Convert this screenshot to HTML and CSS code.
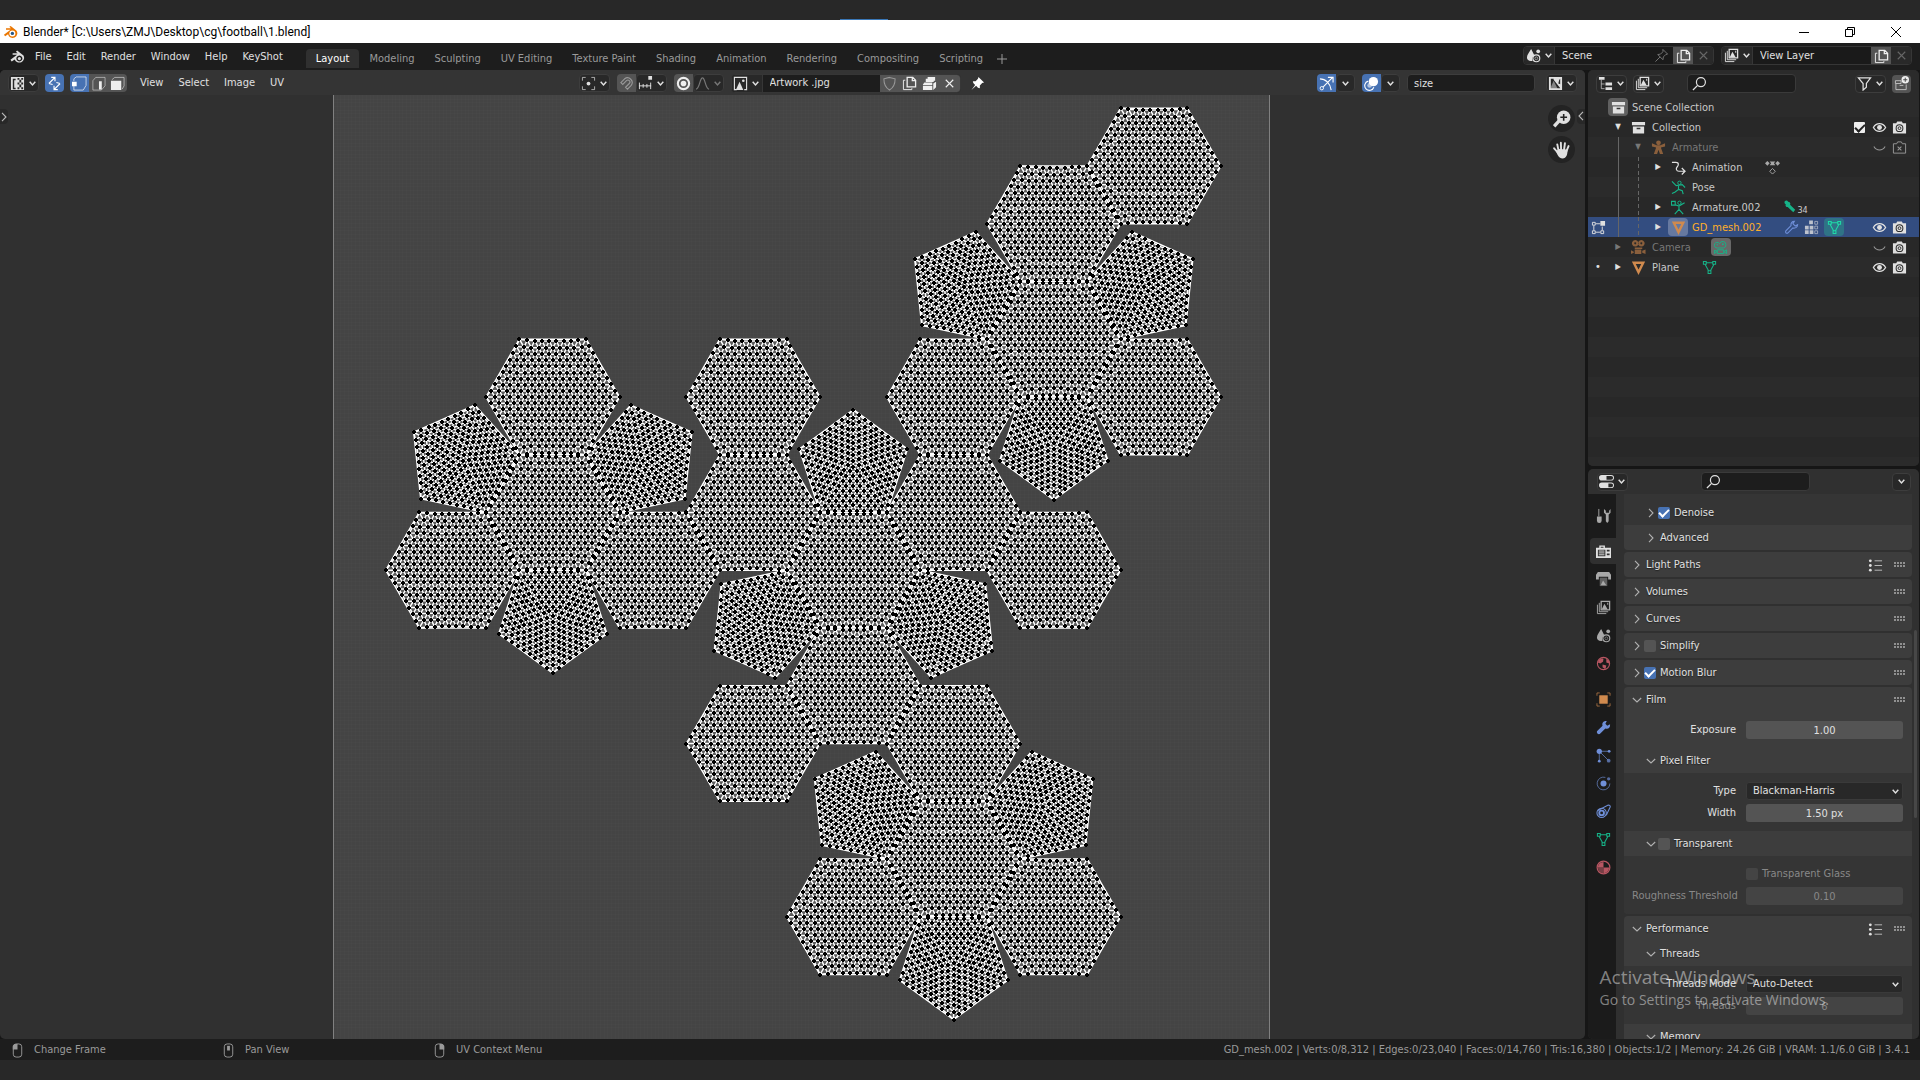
FILE: index.html
```html
<!DOCTYPE html>
<html lang="en">
<head>
    <meta charset="UTF-8">
    <meta name="viewport" content="width=device-width, initial-scale=1.0">
    <title>Blender* [C:\Users\ZMJ\Desktop\cg\football\1.blend]</title>
    <link rel="stylesheet" href="styles.css">
</head>
<body>
    <!-- Icon set -->
    <svg class="icon-set" aria-hidden="true">
        <symbol id="i-blender" viewBox="0 0 16 16"><path d="M1 11.5 8 6H3.2V4.5h5.3L6.8 3l1.4-1 6 4.8A5 5 0 1 1 5.4 11L2.3 13z" fill="currentColor"/><circle cx="10" cy="10" r="3.2" fill="#fff"/><circle cx="10" cy="10" r="1.8" fill="#265787"/></symbol>
        <symbol id="i-blender-mono" viewBox="0 0 16 16"><path fill-rule="evenodd" d="M.5 11.5 7.5 6H2.8V4.4h5.4L6.3 3l1.3-1.4 6.8 5.2A5.2 5.2 0 1 1 5 11.2L1.8 13.4zM10 7a3.2 3.2 0 1 0 .01 0z" fill="currentColor"/><circle cx="10" cy="10.2" r="1.7" fill="currentColor"/></symbol>
        <symbol id="i-down" viewBox="0 0 8 8"><path d="M1.5 2.5 4 5.3l2.5-2.8" fill="none" stroke="currentColor" stroke-width="1.3"/></symbol>
        <symbol id="i-right" viewBox="0 0 10 10"><path d="m3 .8 4 4.2-4 4.2" fill="none" stroke="currentColor" stroke-width="1.1"/></symbol>
        <symbol id="i-open" viewBox="0 0 10 10"><path d="M.8 3 5 7l4.200-4" fill="none" stroke="currentColor" stroke-width="1.1"/></symbol>
        <symbol id="i-uv" viewBox="0 0 16 16"><path fill="currentColor" d="M1 1h14v14H1z"/><path fill="#282828" d="M3 3h3v1.500H4.500v8H6V14H3zM8 2h2v2H8zm4 0h2v2h-2zm-2 2h2v3h-2zM8 7h2v2H8zm4 0h2v2h-2zm-2 2h2v3h-2zm-2 3h2v2H8zm4 0h2v2h-2z"/></symbol>
        <symbol id="i-sync" viewBox="0 0 16 16"><path d="M2 8 8.500 1.500M4.500 1.500h4v4M14 8l-6.500 6.500m4 0h-4v-4M2 8l4 1M14 8l-4-1" fill="none" stroke="currentColor" stroke-width="1.200"/></symbol>
        <symbol id="i-vert" viewBox="0 0 16 16"><path d="M2 5.500V3l2.500-2H15v9l-3 5H2v-5" fill="none" stroke="currentColor" stroke-opacity=".7"/><path fill="currentColor" d="M0 6h5v5H0z"/></symbol>
        <symbol id="i-edge" viewBox="0 0 16 16"><path d="M2 5l3-3.500h10v9L11 15H2z" fill="none" stroke="currentColor" stroke-opacity=".55"/><path fill="currentColor" d="M8.500 5.500h3v9h-3z"/></symbol>
        <symbol id="i-face" viewBox="0 0 16 16"><path d="M2 4l3-2.500h10v9L13 14" fill="none" stroke="currentColor" stroke-opacity=".6"/><path fill="currentColor" d="M1 5h11v10H1z"/></symbol>
        <symbol id="i-pivot" viewBox="0 0 16 16"><path d="M1.500 5V1.500H5m6 0h3.500V5m0 6v3.500H11m-6 0H1.500V11" fill="none" stroke="currentColor" stroke-opacity=".75"/><circle cx="8" cy="8" r="2" fill="currentColor"/></symbol>
        <symbol id="i-magnet" viewBox="0 0 16 16"><path d="M2 7 6 3a5 5 0 0 1 7 7l-4 4-2-2 4-4a2 2 0 0 0-3-3L4 9z" fill="none" stroke="currentColor" stroke-width="1.200"/></symbol>
        <symbol id="i-snap" viewBox="0 0 16 16"><path d="M1 10.500h13M1.500 7v7M5.500 8.500v4m4-4v4m4-5.500v7" fill="none" stroke="currentColor"/><path fill="currentColor" d="M11 0h4v4h-4z"/></symbol>
        <symbol id="i-prop" viewBox="0 0 16 16"><circle cx="8" cy="8" r="6" fill="none" stroke="currentColor" stroke-width="2.200"/><circle cx="8" cy="8" r="3" fill="currentColor"/></symbol>
        <symbol id="i-bell" viewBox="0 0 16 16"><path d="M1 14c4 0 4-12 7-12s3 12 7 12" fill="none" stroke="currentColor" stroke-width="1.300"/></symbol>
        <symbol id="i-image" viewBox="0 0 16 16"><path d="M4 14.500H1.500v-13h13v13H12" fill="none" stroke="currentColor" stroke-width="1.200"/><path d="m3 15 4-9 4 9z" fill="currentColor"/><circle cx="11" cy="5" r="1.400" fill="currentColor"/></symbol>
        <symbol id="i-imagefill" viewBox="0 0 16 16"><path d="M2 2h12v12H2z" fill="none" stroke="currentColor" stroke-width="2"/><path d="m2 14 4-9 4.500 9z" fill="currentColor" fill-opacity=".5"/><path d="m6 4 8 10V9l-3-1 1-4 2-2H6z" fill="currentColor"/></symbol>
        <symbol id="i-shield" viewBox="0 0 16 16"><path d="M8 1.500 14 3c0 6-1.500 9.500-6 12-4.500-2.500-6-6-6-12z" fill="none" stroke="currentColor" stroke-width="1.100"/></symbol>
        <symbol id="i-copy" viewBox="0 0 16 16"><path d="M5.500 1.500h6l3 3v7h-9zM11 1.500V5h3.500" fill="none" stroke="currentColor" stroke-width="1.400"/><path d="M3.500 4.500h-2v10h9v-1.500" fill="none" stroke="currentColor"/></symbol>
        <symbol id="i-files" viewBox="0 0 16 16"><path d="M6 1h8v4h-1.500v1.500H4V3h2zM1 9l1.500-2H11v2.500H1zM1 10.500h10V15H1zM12 8l3-2v6l-3 3z" fill="currentColor"/></symbol>
        <symbol id="i-x" viewBox="0 0 16 16"><path d="m4 4 8 8m0-8-8 8" fill="none" stroke="currentColor" stroke-width="1.200"/></symbol>
        <symbol id="i-pin" viewBox="0 0 16 16"><path d="m9 1 6 6-2 .5-2.500 2.500v3L8.500 12.500l-2-2-5 4.500 4-5.500-2-2L3 5.500h3L8.500 3z" fill="currentColor"/></symbol>
        <symbol id="i-pinline" viewBox="0 0 16 16"><path d="m9.500 1.500 5 5-2 .5-2.500 2.500-.5 3-5.500-5.500 3-.5 2.500-2.500zM6.500 9.500l-5 5" fill="none" stroke="currentColor"/></symbol>
        <symbol id="i-gizmo" viewBox="0 0 16 16"><path d="M1 3c6 0 11 5 12 12M4.500 11.500 14 2M9.500 1.500H15V7" fill="none" stroke="currentColor" stroke-width="1.200"/><circle cx="3" cy="13" r="1.800" fill="none" stroke="currentColor"/></symbol>
        <symbol id="i-overlay" viewBox="0 0 16 16"><circle cx="10" cy="6" r="5" fill="currentColor"/><path d="M4.500 5.500a5 5 0 1 0 6 6.500" fill="none" stroke="currentColor" stroke-width="1.200"/><circle cx="6" cy="10" r="2.500" fill="currentColor" fill-opacity=".6"/></symbol>
        <symbol id="i-zoom" viewBox="0 0 16 16"><circle cx="9.500" cy="6.500" r="6" fill="currentColor"/><path d="m6 9-5 5.500" stroke="currentColor" stroke-width="3"/><path d="M9.500 3.500v6m-3-3h6" stroke="#222" stroke-width="1.400"/></symbol>
        <symbol id="i-hand" viewBox="0 0 16 16"><path d="M4 10 1 6.500m4 2.500L3.800 3m3.400 5L7 1.500M9.800 8l.8-6M12 9l1.800-4.500" fill="none" stroke="currentColor" stroke-width="1.700" stroke-linecap="round"/><path d="M2 8c2 1.500 2-.5 3-1l7.800.5c.4 4-.8 8-4.300 8S4 12 2 8z" fill="currentColor"/></symbol>
        <symbol id="i-scene" viewBox="0 0 16 16"><path d="M5.500 1 9 8a4 4 0 0 0-2 5.500c-3 1-6-.5-6-3.500C1 7 4 4 5.500 1z" fill="currentColor"/><circle cx="11" cy="11" r="3.700" fill="none" stroke="currentColor" stroke-width="1.200"/><circle cx="13" cy="3.500" r="2" fill="currentColor"/><circle cx="11" cy="11" r="1.500" fill="none" stroke="currentColor" stroke-opacity=".6"/></symbol>
        <symbol id="i-layer" viewBox="0 0 16 16"><path d="M5.500 1.500h9v9h-9z" fill="none" stroke="currentColor" stroke-width="1.400"/><path d="m6 10 3-6 3.500 6z" fill="currentColor"/><path d="M12 3h1v2h-1z" fill="currentColor"/><path d="M3.500 3v9.500H13M1.500 5v9.500H11" fill="none" stroke="currentColor"/></symbol>
        <symbol id="i-outliner" viewBox="0 0 16 16"><path d="M1 1h6v3H1zM8 7h7v3H8zm0 5h7v3H8z" fill="currentColor"/><path d="M3.500 4v9.500H7M3.500 8.500H7" fill="none" stroke="currentColor" stroke-opacity=".7"/></symbol>
        <symbol id="i-search" viewBox="0 0 16 16"><circle cx="9.500" cy="6.500" r="4.800" fill="none" stroke="currentColor" stroke-width="1.300"/><path d="m6 10-5 5" stroke="currentColor" stroke-width="1.400"/></symbol>
        <symbol id="i-filter" viewBox="0 0 16 16"><path d="M1.500 2h13L10 8v4l-3.500 3V8z" fill="none" stroke="currentColor" stroke-width="1.300"/></symbol>
        <symbol id="i-newcol" viewBox="0 0 16 16"><path d="M2 8.500v6h11V9M6 10h4M1.500 5h6v3h-6z" fill="none" stroke="currentColor" stroke-opacity=".7"/><circle cx="12" cy="4" r="4" fill="currentColor"/><path d="M12 1.800v4.400M9.800 4h4.400" stroke="#444"/></symbol>
        <symbol id="i-box" viewBox="0 0 16 16"><path d="M1 2h14v3.500H1zM2 7h12v7.500H2z" fill="currentColor"/><path d="M6 9h4" stroke="#333" stroke-width="1.500"/></symbol>
        <symbol id="i-eye" viewBox="0 0 16 16"><path d="M1.500 8c3-5.500 10-5.500 13 0-3 5.500-10 5.500-13 0z" fill="none" stroke="currentColor" stroke-width="1.400"/><circle cx="8" cy="8" r="2.600" fill="currentColor"/></symbol>
        <symbol id="i-closed" viewBox="0 0 16 16"><path d="M2 7c3 5 9 5 12 0" fill="none" stroke="currentColor" stroke-width="1.100"/></symbol>
        <symbol id="i-cam" viewBox="0 0 16 16"><path d="M1 3.500h3.500l1-2h5l1 2H15v11H1z" fill="currentColor"/><circle cx="8" cy="8.700" r="3.600" fill="none" stroke="#2b2b2b" stroke-width="1.100"/><circle cx="8" cy="8.700" r="1.500" fill="none" stroke="#2b2b2b"/></symbol>
        <symbol id="i-camoff" viewBox="0 0 16 16"><path d="M1.500 4h3.500l1-2h4l1 2h3.500v10h-13z" fill="none" stroke="currentColor"/><path d="m6 7 4 4m0-4-4 4" stroke="currentColor" stroke-width="1.100"/></symbol>
        <symbol id="i-arm" viewBox="0 0 16 16"><circle cx="8" cy="3" r="2.500" fill="currentColor"/><path d="M1 3.500 6 5.500h4l5-2V7l-4.500 1 2.500 7h-3.500L8 10.500 6.500 15H3l2.500-7L1 7z" fill="currentColor"/></symbol>
        <symbol id="i-anim" viewBox="0 0 16 16"><path d="M1 2.500h4c4 0 3 3.500 1.500 5s-1 4.500 2 4.500h6M11.500 8.500 15 12l-3.500 3.500" fill="none" stroke="currentColor" stroke-width="1.300"/></symbol>
        <symbol id="i-keys" viewBox="0 0 16 16"><path d="m2.500 1 2.500 2.500L2.500 6 0 3.500zM13.500 1 16 3.500 13.500 6 11 3.500zM5 1.500h6l-1.500 2 1.500 2H5l1.500-2z" fill="currentColor"/><path d="m8 9 3 3-3 3-3-3z" fill="none" stroke="currentColor"/></symbol>
        <symbol id="i-pose" viewBox="0 0 16 16"><circle cx="9" cy="3" r="1.800" fill="none" stroke="currentColor"/><path d="M1 1.500 5.500 6 12 5l3 3M8 6v4l-4 3-3 1.500M8 10l4 1.500 1 3.500" fill="none" stroke="currentColor" stroke-width="1.200"/></symbol>
        <symbol id="i-armdata" viewBox="0 0 16 16"><circle cx="9" cy="3" r="1.800" fill="none" stroke="currentColor"/><path d="M.5 1.500h4v4h-4zM4.500 5l4 1.500 6-3.500M8.500 6.500V10L4 15m4.500-5 4.500 5" fill="none" stroke="currentColor" stroke-width="1.200"/></symbol>
        <symbol id="i-bone" viewBox="0 0 16 16"><path d="M3 4.500A2 2 0 1 1 5.500 2a2 2 0 0 1 2 3L13 10.500 11 13 5 7.500a2 2 0 0 1-2-3z" fill="currentColor"/></symbol>
        <symbol id="i-mesh" viewBox="0 0 16 16"><path d="M3 3h10L8 13z" fill="none" stroke="currentColor" stroke-width="2.600"/></symbol>
        <symbol id="i-meshdata" viewBox="0 0 16 16"><path d="M4.500 3h7M3.500 5 7 11.500m5.500-6.500L9 11.500M1.500 1.500h3v3h-3zm10 0h3v3h-3zm-5 10h3v3h-3z" fill="none" stroke="currentColor" stroke-width="1.100"/></symbol>
        <symbol id="i-wrench" viewBox="0 0 16 16"><path d="M15 4.500 12 6 10 4l1.500-3C8 .5 6 3 7 6l-6 6c-.5 2 1 3.500 3 3l6-6c3 1 5.500-1 5-4.500z" fill="currentColor"/></symbol>
        <symbol id="i-wrenchline" viewBox="0 0 16 16"><path d="M14.500 5 12 6.500 9.500 4 11 1.500C8.500 1.500 7 3.500 7.500 6L2 11.500c-1 2 .5 3 2 2.500L9.500 8.500c3 .5 5-1 5-3.500z" fill="none" stroke="currentColor" stroke-width="1.200"/></symbol>
        <symbol id="i-particles" viewBox="0 0 16 16"><circle cx="3.500" cy="3.500" r="2.800" fill="currentColor"/><path d="M3.500 3.500h10M3.500 3.500v10M3.500 3.500l9.500 9.500" stroke="currentColor" stroke-opacity=".7"/><circle cx="14" cy="3.500" r="1.500" fill="currentColor"/><circle cx="3.500" cy="14" r="1.500" fill="currentColor"/><circle cx="13.500" cy="13.500" r="2" fill="currentColor" fill-opacity=".7"/></symbol>
        <symbol id="i-group" viewBox="0 0 16 16"><path d="M5.500.500h4v4h-4zM1 6h4v4H1zm5 0h4v4H6zM1 11h4v4H1zm5 0h4v4H6z" fill="currentColor" fill-opacity=".8"/><path d="M11.500 1.500h3v3h-3zm0 5h3v3h-3zm0 5h3v3h-3z" fill="none" stroke="currentColor" stroke-opacity=".6"/></symbol>
        <symbol id="i-movie" viewBox="0 0 16 16"><path fill-rule="evenodd" d="M4.500 0a3.500 3.500 0 1 0 .01 0zm0 2.500a1 1 0 1 0 .01 0zM11 0a3.500 3.500 0 1 0 .01 0zm0 2.500a1 1 0 1 0 .01 0zM4 8h8v1.500h-8zM4 10h7v5H4zM0 11l3 1.500v1L0 15zM15.500 10v5L12 13.500v-2z" fill="currentColor"/></symbol>
        <symbol id="i-movieline" viewBox="0 0 16 16"><path d="M4.500 8.500a3 3 0 1 1 2.500-4.500 3.500 3.500 0 1 1 4 4.500zM4.500 10.500h7v4h-7zM1.500 11l3 1-3 2.500zM14.500 10.500v4l-3-2z" fill="none" stroke="currentColor"/><circle cx="4.500" cy="5" r=".8" fill="currentColor"/><circle cx="10.500" cy="4.500" r="1" fill="currentColor"/></symbol>
        <symbol id="i-editmode" viewBox="0 0 16 16"><path d="M1.500 2.500h3v3h-3zm0 9h3v3h-3zm9 0h3v3h-3zM5 4h5M3 6v5m9-4v4m-7 2h5" fill="none" stroke="currentColor"/><path d="M10 1h5v5h-5z" fill="currentColor"/></symbol>
        <symbol id="i-props" viewBox="0 0 16 16"><path fill-rule="evenodd" d="M3 1h10a3 3 0 0 1 0 6H3a3 3 0 0 1 0-6zm5 1v4h5a2 2 0 0 0 0-4zM3 9h10a3 3 0 0 1 0 6H3a3 3 0 0 1 0-6zm7 1v4h3a2 2 0 0 0 0-4z" fill="currentColor"/></symbol>
        <symbol id="i-tool" viewBox="0 0 16 16"><path d="M3 1v8" stroke="currentColor"/><path d="M1 9h5v4.500a2.500 2.500 0 0 1-5 0zM8.500 1v4l2 2v7l1.500 2 1.500-2V7L15.500 5V1L14 3v2h-3.500V3z" fill="currentColor"/></symbol>
        <symbol id="i-render" viewBox="0 0 16 16"><path fill-rule="evenodd" d="M0 4h3.500V1.500h6V4H16v11H0zm5 0h3V3H5zM2 6v7h8V6zm9.500 0v2h3V6zm0 4v2h3v-2z" fill="currentColor"/><path d="M3 7.500h6m-6 2h6m-6 2h6" stroke="currentColor"/></symbol>
        <symbol id="i-output" viewBox="0 0 16 16"><path d="M2 0h12l2 3v5h-3V5H3v3H0V3z" fill="currentColor"/><path d="M4 6h8v9H4z" fill="currentColor" fill-opacity=".5"/><path d="m5 14 2.500-5 3.500 5z" fill="currentColor"/></symbol>
        <symbol id="i-world" viewBox="0 0 16 16"><circle cx="8" cy="8" r="6.500" fill="none" stroke="currentColor" stroke-width="1.200"/><path d="M3 4c2-1 4-2 5-1L7.500 6 4.500 8 2 7zM7 9l4 1-1 4-3-2zM11 3l3 2v3l-3-1z" fill="currentColor"/></symbol>
        <symbol id="i-object" viewBox="0 0 16 16"><path d="M1 4V1h3m8 0h3v3m0 8v3h-3m-8 0H1v-3" fill="none" stroke="currentColor" stroke-opacity=".7"/><path d="M3.500 3.500h9v9h-9z" fill="currentColor"/></symbol>
        <symbol id="i-physics" viewBox="0 0 16 16"><circle cx="8" cy="8" r="3.200" fill="currentColor"/><path d="M10 1.500A6.800 6.800 0 1 0 14.800 8" fill="none" stroke="currentColor" stroke-opacity=".7"/><circle cx="13.500" cy="3" r="1.800" fill="currentColor" fill-opacity=".7"/></symbol>
        <symbol id="i-constraint" viewBox="0 0 16 16"><path d="M2 7 13 1c2 0 2.500 1.500 2 2.500L11 12" fill="none" stroke="currentColor" stroke-width="1.100"/><circle cx="6" cy="9.500" r="5" fill="none" stroke="currentColor" stroke-width="1.100"/><circle cx="6" cy="9.500" r="2.500" fill="none" stroke="currentColor" stroke-width="2"/></symbol>
        <symbol id="i-material" viewBox="0 0 16 16"><circle cx="8" cy="8" r="6.800" fill="none" stroke="currentColor" stroke-width="1.300"/><path d="M8 8H2a6 6 0 0 1 6-6zM8 8h6a6 6 0 0 1-6 6z" fill="currentColor"/><path d="M2 8h6v6a6 6 0 0 1-6-6z" fill="currentColor" fill-opacity=".6"/></symbol>
        <symbol id="i-list" viewBox="0 0 16 16"><path d="M7 3h8M7 8h8M7 13h8" stroke="currentColor" stroke-opacity=".8"/><circle cx="2.500" cy="3" r="1.500" fill="currentColor"/><circle cx="2.500" cy="8" r="1.500" fill="currentColor"/><circle cx="2.500" cy="13" r="1.500" fill="currentColor"/></symbol>
        <symbol id="i-lmb" viewBox="0 0 12 16"><rect x="1.500" y="1" width="9" height="14" rx="3" fill="none" stroke="currentColor"/><path d="M1 7V3l2-2h3v6z" fill="currentColor"/></symbol>
        <symbol id="i-mmb" viewBox="0 0 12 16"><rect x="1.500" y="1" width="9" height="14" rx="3" fill="none" stroke="currentColor"/><path d="M4.500 3h3v5h-3z" fill="currentColor"/></symbol>
        <symbol id="i-rmb" viewBox="0 0 12 16"><rect x="1.500" y="1" width="9" height="14" rx="3" fill="none" stroke="currentColor"/><path d="M6 1h3l2 2v4H6z" fill="currentColor"/></symbol>
    </svg>

    <div class="desktop-strip"><span class="strip-mark"></span></div>

    <header class="titlebar">
        <svg class="icon logo"><use href="#i-blender"/></svg>
        <span class="titlebar-text">Blender* [C:\Users\ZMJ\Desktop\cg\football\1.blend]</span>
        <div class="window-buttons">
            <button aria-label="Minimize"><svg viewBox="0 0 12 12"><path d="M1 6.500h10"/></svg></button>
            <button aria-label="Restore"><svg viewBox="0 0 12 12"><path d="M1.500 3.500h7v7h-7zM3.500 3V1.500h7v7H9"/></svg></button>
            <button aria-label="Close"><svg viewBox="0 0 12 12"><path d="m1 1 10 10M11 1 1 11"/></svg></button>
        </div>
    </header>

    <!-- Menus and workspaces -->
    <nav class="menubar">
        <button class="app-menu" aria-label="Blender"><svg class="icon"><use href="#i-blender-mono"/></svg></button>
        <div class="menus">
            <button>File</button><button>Edit</button><button>Render</button><button>Window</button><button>Help</button><button>KeyShot</button>
        </div>
        <div class="workspaces">
            <button class="active">Layout</button><button>Modeling</button><button>Sculpting</button><button>UV Editing</button><button>Texture Paint</button><button>Shading</button><button>Animation</button><button>Rendering</button><button>Compositing</button><button>Scripting</button>
            <button class="add" aria-label="Add workspace"><svg class="icon-s" viewBox="0 0 10 10"><path d="M5 0v10M0 5h10" stroke="currentColor"/></svg></button>
        </div>
        <div class="id-block scene-block">
            <button class="drop" aria-label="Browse scene"><svg class="icon"><use href="#i-scene"/></svg><svg class="chev"><use href="#i-down"/></svg></button>
            <input aria-label="Scene name" value="Scene">
            <button class="plain" aria-label="Pin scene"><svg class="icon"><use href="#i-pinline"/></svg></button>
            <button class="tool" aria-label="New scene"><svg class="icon"><use href="#i-copy"/></svg></button>
            <button class="off" aria-label="Delete scene"><svg class="icon"><use href="#i-x"/></svg></button>
        </div>
        <div class="id-block layer-block">
            <button class="drop" aria-label="Browse view layer"><svg class="icon"><use href="#i-layer"/></svg><svg class="chev"><use href="#i-down"/></svg></button>
            <input aria-label="View layer name" value="View Layer">
            <button class="tool" aria-label="New view layer"><svg class="icon"><use href="#i-copy"/></svg></button>
            <button class="off" aria-label="Remove view layer"><svg class="icon"><use href="#i-x"/></svg></button>
        </div>
    </nav>

    <main class="workspace">
        <!-- UV editor -->
        <section class="editor uv-editor">
            <div class="editor-header">
                <div class="header-side">
                    <button class="drop" aria-label="Editor type"><svg class="icon"><use href="#i-uv"/></svg><svg class="chev"><use href="#i-down"/></svg></button>
                    <button class="tool on solo" aria-label="Sync selection"><svg class="icon"><use href="#i-sync"/></svg></button>
                    <div class="segment">
                        <button class="tool on" aria-label="Vertex"><svg class="icon"><use href="#i-vert"/></svg></button><button class="tool" aria-label="Edge"><svg class="icon"><use href="#i-edge"/></svg></button><button class="tool" aria-label="Face"><svg class="icon"><use href="#i-face"/></svg></button>
                    </div>
                    <div class="menus editor-menus"><button>View</button><button>Select</button><button>Image</button><button>UV</button></div>
                </div>
                <div class="header-mid">
                    <button class="drop" aria-label="Pivot"><svg class="icon"><use href="#i-pivot"/></svg><svg class="chev"><use href="#i-down"/></svg></button>
                    <div class="segment">
                        <button class="tool dim" aria-label="Snap"><svg class="icon"><use href="#i-magnet"/></svg></button><button class="drop" aria-label="Snap target"><svg class="icon"><use href="#i-snap"/></svg><svg class="chev"><use href="#i-down"/></svg></button>
                    </div>
                    <div class="segment">
                        <button class="tool" aria-label="Proportional editing"><svg class="icon"><use href="#i-prop"/></svg></button><button class="drop faded" aria-label="Falloff"><svg class="icon"><use href="#i-bell"/></svg><svg class="chev"><use href="#i-down"/></svg></button>
                    </div>
                    <div class="id-block image-block">
                        <button class="drop" aria-label="Browse image"><svg class="icon"><use href="#i-image"/></svg><svg class="chev"><use href="#i-down"/></svg></button>
                        <input aria-label="Image name" value="Artwork .jpg">
                        <button class="tool dim" aria-label="Fake user"><svg class="icon"><use href="#i-shield"/></svg></button>
                        <button class="tool" aria-label="New image"><svg class="icon"><use href="#i-copy"/></svg></button>
                        <button class="tool" aria-label="Open image"><svg class="icon"><use href="#i-files"/></svg></button>
                        <button class="tool" aria-label="Unlink image"><svg class="icon"><use href="#i-x"/></svg></button>
                    </div>
                    <button class="plain pin" aria-label="Pin"><svg class="icon"><use href="#i-pin"/></svg></button>
                </div>
                <div class="header-end">
                    <div class="segment">
                        <button class="tool on" aria-label="Gizmos"><svg class="icon"><use href="#i-gizmo"/></svg></button><button class="drop narrow" aria-label="Gizmo options"><svg class="chev"><use href="#i-down"/></svg></button>
                    </div>
                    <div class="segment">
                        <button class="tool on" aria-label="Overlays"><svg class="icon"><use href="#i-overlay"/></svg></button><button class="drop narrow" aria-label="Overlay options"><svg class="chev"><use href="#i-down"/></svg></button>
                    </div>
                    <input class="uv-name" aria-label="UV map" value="size">
                    <button class="drop display" aria-label="Display channels"><svg class="icon"><use href="#i-imagefill"/></svg><svg class="chev"><use href="#i-down"/></svg></button>
                </div>
            </div>
            <div class="uv-view">
                <canvas id="uvCanvas" role="img" aria-label="Unwrapped football mesh"></canvas>
                <button class="edge-toggle left" aria-label="Show toolbar"><svg><use href="#i-right"/></svg></button>
                <button class="edge-toggle right" aria-label="Show sidebar"><svg><use href="#i-right"/></svg></button>
                <div class="nav-gizmos">
                    <button aria-label="Zoom"><svg class="icon-l"><use href="#i-zoom"/></svg></button>
                    <button aria-label="Pan"><svg class="icon-l"><use href="#i-hand"/></svg></button>
                </div>
            </div>
        </section>

        <div class="side">
            <!-- Outliner -->
            <section class="editor outliner">
                <div class="editor-header">
                    <button class="drop" aria-label="Editor type"><svg class="icon"><use href="#i-outliner"/></svg><svg class="chev"><use href="#i-down"/></svg></button>
                    <button class="drop" aria-label="Display mode"><svg class="icon"><use href="#i-layer"/></svg><svg class="chev"><use href="#i-down"/></svg></button>
                    <label class="search"><svg class="icon"><use href="#i-search"/></svg><input type="search" aria-label="Filter outliner"></label>
                    <button class="drop" aria-label="Filter"><svg class="icon"><use href="#i-filter"/></svg><svg class="chev"><use href="#i-down"/></svg></button>
                    <button class="tool solo" aria-label="New collection"><svg class="icon"><use href="#i-newcol"/></svg></button>
                </div>
                <ul class="tree">
                    <li><span class="cell"></span><span class="cell chip"><svg class="icon"><use href="#i-box"/></svg></span><span class="name">Scene Collection</span></li>
                    <li><span class="cell"></span><span class="cell tri">▼</span><span class="cell"><svg class="icon"><use href="#i-box"/></svg></span><span class="name">Collection</span>
                        <span class="flags"><input type="checkbox" class="white-check" aria-label="Include collection" checked><svg class="icon"><use href="#i-eye"/></svg><svg class="icon"><use href="#i-cam"/></svg></span></li>
                    <li class="muted"><span class="cell"></span><span class="cell guide"></span><span class="cell tri">▼</span><span class="cell orange"><svg class="icon"><use href="#i-arm"/></svg></span><span class="name">Armature</span>
                        <span class="flags"><svg class="icon"><use href="#i-closed"/></svg><svg class="icon"><use href="#i-camoff"/></svg></span></li>
                    <li><span class="cell"></span><span class="cell guide"></span><span class="cell guide dashed"></span><span class="cell tri">▶</span><span class="cell"><svg class="icon"><use href="#i-anim"/></svg></span><span class="name">Animation</span><span class="extras grey"><svg class="icon"><use href="#i-keys"/></svg></span></li>
                    <li><span class="cell"></span><span class="cell guide"></span><span class="cell guide dashed"></span><span class="cell"></span><span class="cell green"><svg class="icon"><use href="#i-pose"/></svg></span><span class="name">Pose</span></li>
                    <li><span class="cell"></span><span class="cell guide"></span><span class="cell guide dashed"></span><span class="cell tri">▶</span><span class="cell green"><svg class="icon"><use href="#i-armdata"/></svg></span><span class="name">Armature.002</span><span class="extras green"><svg class="icon"><use href="#i-bone"/></svg><small>34</small></span></li>
                    <li class="selected"><span class="cell"><svg class="icon"><use href="#i-editmode"/></svg></span><span class="cell guide"></span><span class="cell guide dashed"></span><span class="cell tri">▶</span><span class="cell chip orange"><svg class="icon"><use href="#i-mesh"/></svg></span><span class="name">GD_mesh.002</span>
                        <span class="extras"><svg class="icon blue"><use href="#i-wrenchline"/></svg><svg class="icon"><use href="#i-group"/></svg><span class="cell chip data-chip"><svg class="icon"><use href="#i-meshdata"/></svg></span></span>
                        <span class="flags"><svg class="icon"><use href="#i-eye"/></svg><svg class="icon"><use href="#i-cam"/></svg></span></li>
                    <li class="muted"><span class="cell"></span><span class="cell tri">▶</span><span class="cell orange"><svg class="icon"><use href="#i-movie"/></svg></span><span class="name">Camera</span><span class="extras close"><span class="cell chip green"><svg class="icon"><use href="#i-movieline"/></svg></span></span>
                        <span class="flags"><svg class="icon"><use href="#i-closed"/></svg><svg class="icon lit"><use href="#i-cam"/></svg></span></li>
                    <li><span class="cell dot">•</span><span class="cell tri">▶</span><span class="cell orange"><svg class="icon"><use href="#i-mesh"/></svg></span><span class="name">Plane</span><span class="extras green"><svg class="icon"><use href="#i-meshdata"/></svg></span>
                        <span class="flags"><svg class="icon"><use href="#i-eye"/></svg><svg class="icon"><use href="#i-cam"/></svg></span></li>
                </ul>
            </section>

            <!-- Properties -->
            <section class="editor properties">
                <div class="editor-header">
                    <button class="drop" aria-label="Editor type"><svg class="icon"><use href="#i-props"/></svg><svg class="chev"><use href="#i-down"/></svg></button>
                    <label class="search"><svg class="icon"><use href="#i-search"/></svg><input type="search" aria-label="Search properties"></label>
                    <button class="drop narrow" aria-label="Options"><svg class="chev"><use href="#i-down"/></svg></button>
                </div>
                <div class="props-body">
                    <nav class="tabs">
                        <button class="grey" aria-label="Tool"><svg class="icon"><use href="#i-tool"/></svg></button>
                        <button class="active group" aria-label="Render"><svg class="icon"><use href="#i-render"/></svg></button>
                        <button class="grey" aria-label="Output"><svg class="icon"><use href="#i-output"/></svg></button>
                        <button class="grey" aria-label="View Layer"><svg class="icon"><use href="#i-layer"/></svg></button>
                        <button class="grey" aria-label="Scene"><svg class="icon"><use href="#i-scene"/></svg></button>
                        <button class="red" aria-label="World"><svg class="icon"><use href="#i-world"/></svg></button>
                        <button class="orange group" aria-label="Object"><svg class="icon"><use href="#i-object"/></svg></button>
                        <button class="blue" aria-label="Modifiers"><svg class="icon"><use href="#i-wrench"/></svg></button>
                        <button class="blue" aria-label="Particles"><svg class="icon"><use href="#i-particles"/></svg></button>
                        <button class="blue" aria-label="Physics"><svg class="icon"><use href="#i-physics"/></svg></button>
                        <button class="blue" aria-label="Constraints"><svg class="icon"><use href="#i-constraint"/></svg></button>
                        <button class="green" aria-label="Data"><svg class="icon"><use href="#i-meshdata"/></svg></button>
                        <button class="red" aria-label="Material"><svg class="icon"><use href="#i-material"/></svg></button>
                    </nav>
                    <div class="panels">
                        <div class="panel cut">
                            <div class="panel-head sub"><svg class="arrow"><use href="#i-right"/></svg><input type="checkbox" id="denoise" checked><label for="denoise">Denoise</label></div>
                            <div class="panel-head sub"><svg class="arrow"><use href="#i-right"/></svg><span>Advanced</span></div>
                        </div>
                        <div class="panel"><div class="panel-head"><svg class="arrow"><use href="#i-right"/></svg><span>Light Paths</span><svg class="icon preset"><use href="#i-list"/></svg><i class="grip"></i></div></div>
                        <div class="panel"><div class="panel-head"><svg class="arrow"><use href="#i-right"/></svg><span>Volumes</span><i class="grip"></i></div></div>
                        <div class="panel"><div class="panel-head"><svg class="arrow"><use href="#i-right"/></svg><span>Curves</span><i class="grip"></i></div></div>
                        <div class="panel"><div class="panel-head"><svg class="arrow"><use href="#i-right"/></svg><input type="checkbox" id="simplify"><label for="simplify">Simplify</label><i class="grip"></i></div></div>
                        <div class="panel"><div class="panel-head"><svg class="arrow"><use href="#i-right"/></svg><input type="checkbox" id="blur" checked><label for="blur">Motion Blur</label><i class="grip"></i></div></div>
                        <div class="panel">
                            <div class="panel-head"><svg class="arrow"><use href="#i-open"/></svg><span>Film</span><i class="grip"></i></div>
                            <div class="fields">
                                <div class="field"><label for="exposure">Exposure</label><input id="exposure" value="1.00"></div>
                            </div>
                            <div class="panel-head sub"><svg class="arrow"><use href="#i-open"/></svg><span>Pixel Filter</span></div>
                            <div class="fields tinted">
                                <div class="field"><label for="type">Type</label><span class="select-wrap"><select id="type"><option>Blackman-Harris</option></select><svg class="chev"><use href="#i-down"/></svg></span></div>
                                <div class="field"><label for="width">Width</label><input id="width" value="1.50 px"></div>
                            </div>
                            <div class="panel-head sub"><svg class="arrow"><use href="#i-open"/></svg><input type="checkbox" id="transparent"><label for="transparent">Transparent</label></div>
                            <div class="fields tinted disabled">
                                <div class="field"><span></span><span class="check-line"><input type="checkbox" id="glass" disabled><label for="glass">Transparent Glass</label></span></div>
                                <div class="field"><label for="rough">Roughness Threshold</label><input id="rough" value="0.10" disabled></div>
                            </div>
                        </div>
                        <div class="panel">
                            <div class="panel-head"><svg class="arrow"><use href="#i-open"/></svg><span>Performance</span><svg class="icon preset"><use href="#i-list"/></svg><i class="grip"></i></div>
                            <div class="panel-head sub"><svg class="arrow"><use href="#i-open"/></svg><span>Threads</span></div>
                            <div class="fields tinted">
                                <div class="field"><label for="mode">Threads Mode</label><span class="select-wrap"><select id="mode"><option>Auto-Detect</option></select><svg class="chev"><use href="#i-down"/></svg></span></div>
                                <div class="field disabled"><label for="threads">Threads</label><input id="threads" value="6" disabled></div>
                            </div>
                            <div class="panel-head sub"><svg class="arrow"><use href="#i-open"/></svg><span>Memory</span></div>
                        </div>
                    </div>
                    <div class="scrollbar"></div>
                </div>
            </section>
        </div>
    </main>

    <footer class="statusbar">
        <span class="hint"><svg class="mouse"><use href="#i-lmb"/></svg>Change Frame</span>
        <span class="hint"><svg class="mouse"><use href="#i-mmb"/></svg>Pan View</span>
        <span class="hint"><svg class="mouse"><use href="#i-rmb"/></svg>UV Context Menu</span>
        <span class="stats">GD_mesh.002 | Verts:0/8,312 | Edges:0/23,040 | Faces:0/14,760 | Tris:16,380 | Objects:1/2 | Memory: 24.26 GiB | VRAM: 1.1/6.0 GiB | 3.4.1</span>
    </footer>
    <div class="desktop-strip"></div>

    <div class="activation">
        <div class="activation-title">Activate Windows</div>
        <div class="activation-text">Go to Settings to activate Windows.</div>
    </div>

    <script src="mesh.js"></script>
</body>
</html>
```
FILE: styles.css
```css
* {
    box-sizing: border-box;
}
body {
    margin: 0;
    height: 100vh;
    display: flex;
    flex-direction: column;
    overflow: hidden;
    background-color: #161616;
    color: #e0e0e0;
    font-family: "DejaVu Sans Condensed", "DejaVu Sans", sans-serif;
    font-size: 11px;
    line-height: 14px;
}
button, input, select {
    margin: 0;
    padding: 0;
    border: none;
    background: none;
    color: inherit;
    font: inherit;
    outline: none;
}
button {
    display: flex;
    align-items: center;
    justify-content: center;
}
svg {
    display: block;
    flex: none;
}
.icon-set {
    position: absolute;
    width: 0;
    height: 0;
}
.icon {
    width: 15px;
    height: 15px;
}
.icon-s {
    width: 10px;
    height: 10px;
}
.icon-l {
    width: 18px;
    height: 18px;
}
.chev {
    width: 9px;
    height: 9px;
}

/* Colours of icon families */
.orange { color: #d08a4e; }
.green { color: #16b388; }
.blue { color: #6f8fd8; }
.red { color: #b85662; }
.grey { color: #a8a8a8; }

/* Window frame */
.desktop-strip {
    height: 20px;
    flex: none;
    background-color: #282828;
    display: flex;
    align-items: flex-end;
    justify-content: center;
}
.strip-mark {
    width: 48px;
    height: 1px;
    margin-right: 192px;
    background-color: #3a78b8;
}
.titlebar {
    height: 23px;
    flex: none;
    display: flex;
    align-items: center;
    padding-left: 3px;
    background-color: #fff;
    color: #000;
}
.titlebar .logo {
    color: #ea7600;
}
.titlebar-text {
    margin-left: 5px;
    font-family: Roboto, "Open Sans", sans-serif;
    font-size: 12px;
}
.window-buttons {
    margin-left: auto;
    padding-right: 1px;
    display: flex;
}
.window-buttons button {
    width: 46px;
    height: 23px;
}
.window-buttons svg {
    width: 12px;
    height: 12px;
    fill: none;
    stroke: #000;
}

/* Menubar */
.menubar {
    height: 27px;
    flex: none;
    display: flex;
    padding: 0 8px 0 10px;
    background-color: #1d1d1d;
}
.app-menu {
    height: 27px;
}
.menus {
    display: flex;
    gap: 15px;
    align-items: center;
    margin-left: 10px;
}
.workspaces {
    display: flex;
    align-items: flex-end;
    margin-left: 23px;
    padding-bottom: 2px;
}
.workspaces button {
    height: 19px;
    padding: 1px 10px 0;
    border-radius: 4px 4px 0 0;
    color: #9a9a9a;
}
.workspaces .active {
    background-color: #303030;
    color: #fff;
}
.workspaces .add {
    padding: 0 4px;
}
.id-block {
    display: flex;
    height: 19px;
    border: 1px solid #363636;
    border-radius: 4px;
    background-color: #1a1a1a;
    overflow: hidden;
}
.id-block .drop {
    border: none;
    border-right: 1px solid #363636;
    border-radius: 0;
    height: 17px;
}
.id-block input {
    flex: 1;
    min-width: 0;
    padding-left: 7px;
}
.id-block .tool {
    height: 18px;
    width: 20px;
}
.id-block .off {
    width: 20px;
    color: #666;
    background-color: #292929;
}
.menubar .id-block {
    width: 191px;
    margin-top: 3px;
}
.menubar .scene-block {
    margin-left: auto;
    margin-right: 7px;
}
.scene-block .plain {
    width: 24px;
    color: #777;
}

/* Shared controls */
.drop {
    width: 31px;
    height: 18px;
    gap: 3px;
    border: 1px solid #3d3d3d;
    border-radius: 4px;
    background-color: #282828;
}
.drop.narrow {
    width: 19px;
}
.tool {
    width: 19px;
    height: 18px;
    background-color: #545454;
    color: #eee;
}
.tool.on {
    background-color: #4772b3;
    color: #fff;
}
.tool.solo {
    border-radius: 4px;
}
.tool.dim {
    color: #999;
}
.faded {
    color: #777;
}
.segment {
    display: flex;
    border-radius: 4px;
    overflow: hidden;
}
.search {
    display: flex;
    align-items: center;
    width: 109px;
    height: 19px;
    padding-left: 4px;
    border: 1px solid #3a3a3a;
    border-radius: 4px;
    background-color: #1d1d1d;
}
.search input {
    width: 80px;
}

/* Editors */
.workspace {
    flex: 1;
    min-height: 0;
    display: flex;
    gap: 3px;
    padding-right: 1px;
}
.editor {
    display: flex;
    flex-direction: column;
    border-radius: 5px;
    overflow: hidden;
    background-color: #303030;
}
.editor-header {
    display: flex;
    align-items: center;
    height: 25px;
    flex: none;
}
.uv-editor {
    flex: 1;
    min-width: 0;
}
.uv-editor .editor-header {
    padding: 1px 8px 0 8px;
    background-color: #343434;
}
.header-side, .header-mid, .header-end {
    display: flex;
    align-items: center;
    gap: 7px;
}
.header-side, .header-end {
    flex: 1;
}
.header-side {
    gap: 6px;
}
.header-mid {
    margin-right: 22px;
}
.header-end {
    justify-content: flex-end;
}
.editor-menus {
    margin-left: 7px;
}
.image-block {
    width: 230px;
}
.image-block input {
    background-color: #1d1d1d;
}
.pin {
    color: #fff;
    margin-left: 2px;
}
.uv-name {
    width: 128px;
    height: 18px;
    padding-left: 6px;
    border: 1px solid #3d3d3d;
    border-radius: 4px;
    background-color: #1d1d1d;
}
.display {
    margin-left: 4px;
}

/* UV canvas */
.uv-view {
    position: relative;
    flex: 1;
    min-height: 0;
}
#uvCanvas {
    display: block;
    width: 100%;
    height: 100%;
}
.edge-toggle {
    position: absolute;
    top: 14px;
    width: 8px;
    height: 15px;
    background-color: #282828;
    color: #bbb;
}
.edge-toggle svg {
    width: 10px;
    height: 10px;
}
.edge-toggle.left {
    left: 0;
    border-radius: 0 4px 4px 0;
}
.edge-toggle.right {
    right: 0;
    border-radius: 0 4px 4px 0;
    transform: rotate(180deg);
}
.nav-gizmos {
    position: absolute;
    top: 10px;
    right: 10px;
    display: flex;
    flex-direction: column;
    gap: 4px;
}
.nav-gizmos button {
    width: 27px;
    height: 27px;
    border-radius: 50%;
    background-color: #232323;
}

/* Outliner */
.side {
    width: 331px;
    flex: none;
    display: flex;
    flex-direction: column;
    gap: 3px;
}
.outliner {
    height: 396px;
    flex: none;
    background-color: #282828;
}
.outliner .editor-header {
    height: 27px;
    padding: 0 8px;
    gap: 6px;
    background-color: #2b2b2b;
}
.outliner .search {
    margin-left: 17px;
    margin-right: auto;
}
.tree {
    flex: 1;
    margin: 0;
    padding: 0;
    list-style: none;
    background: repeating-linear-gradient(#2b2b2b 0 20px, #282828 20px 40px);
}
.tree li {
    display: flex;
    align-items: center;
    height: 20px;
    padding-right: 12px;
}
.tree .cell {
    display: flex;
    align-items: center;
    justify-content: center;
    width: 20px;
    height: 20px;
    flex: none;
}
.tree .chip {
    height: 18px;
    border-radius: 4px;
    background-color: rgba(255, 255, 255, 0.25);
}
.tree .tri {
    font-size: 8px;
}
.tree .guide {
    background: linear-gradient(#666, #666) center / 1px 100% no-repeat;
}
.tree .guide.dashed {
    background: repeating-linear-gradient(#666 0 4px, transparent 4px 7px) center / 1px 100% no-repeat;
}
.name {
    margin-left: 4px;
    padding-top: 1px;
    color: #c8c8c8;
}
.muted, .muted .name {
    color: #777;
}
.muted .orange {
    color: #8a5f3c;
}
.muted .chip {
    background-color: rgba(255, 255, 255, 0.3);
}
.muted .flags {
    color: #999;
}
.muted .lit {
    color: #ddd;
}
.selected {
    background-color: #334d80;
}
.selected .name {
    color: #ffaf29;
}
.tree .data-chip {
    background-color: #2f7386;
    color: #1fdba8;
}
.extras {
    display: flex;
    align-items: center;
    gap: 5px;
    margin-left: 23px;
}
.extras.close {
    margin-left: 20px;
}
.extras small {
    align-self: flex-end;
    margin-left: -6px;
    font-size: 9px;
    line-height: 9px;
    color: #ccc;
}
.flags {
    display: flex;
    align-items: center;
    gap: 5px;
    margin-left: auto;
}

/* Checkboxes */
input[type="checkbox"] {
    appearance: none;
    display: grid;
    place-items: center;
    width: 12px;
    height: 12px;
    flex: none;
    border-radius: 2px;
    background-color: #545454;
}
input[type="checkbox"]:checked {
    background-color: #4772b3;
}
input[type="checkbox"]:checked::after {
    content: "";
    width: 4px;
    height: 8px;
    margin-bottom: 2px;
    border: solid #fff;
    border-width: 0 2px 2px 0;
    transform: rotate(45deg);
}
.flags input.white-check:checked {
    width: 11px;
    height: 11px;
    margin: 0 2px;
    border-radius: 1px;
    background-color: #eee;
}
.flags input.white-check:checked::after {
    border-color: #222;
}

/* Properties */
.properties {
    flex: 1;
    min-height: 0;
}
.properties .editor-header {
    padding: 0 8px 0 9px;
    justify-content: space-between;
}
.properties .search {
    margin-right: 10px;
}
.props-body {
    flex: 1;
    min-height: 0;
    display: flex;
}
.tabs {
    width: 28px;
    flex: none;
    padding: 8px 0 0 2px;
    background-color: #1b1b1b;
}
.tabs button {
    width: 26px;
    height: 26px;
    margin-bottom: 2px;
}
.tabs .group {
    margin-top: 10px;
}
.tabs .active {
    border-radius: 4px 0 0 4px;
    background-color: #303030;
}
.panels {
    flex: 1;
    display: flex;
    flex-direction: column;
    gap: 2px;
    margin-left: 8px;
    overflow: hidden;
}
.panel {
    flex: none;
    border-radius: 4px;
    background-color: #3d3d3d;
    overflow: hidden;
}
.panel.cut {
    padding-top: 6px;
    border-radius: 0 0 4px 4px;
    background: linear-gradient(#353535 31px, #3d3d3d 31px);
}
.panel-head {
    display: flex;
    align-items: center;
    height: 25px;
    padding: 1px 6px 0 8px;
    gap: 4px;
    text-shadow: 0 1px 1px #222;
}
.panel-head.sub {
    padding-left: 22px;
}
.panel-head input {
    margin-left: -2px;
}
.tinted {
    background-color: #353535;
}
.arrow {
    width: 10px;
    height: 10px;
    color: #b0b0b0;
}
.grip {
    width: 12px;
    height: 6px;
    margin-left: auto;
    background: radial-gradient(circle at 1px 1px, #909090 0 1px, transparent 1px) 0 0 / 3px 3px;
}
.preset {
    margin-left: auto;
}
.preset + .grip {
    margin-left: 7px;
}
.fields {
    display: flex;
    flex-direction: column;
    gap: 4px;
    padding: 9px 9px 9px 8px;
}
.field {
    display: grid;
    grid-template-columns: 104px 1fr;
    gap: 10px;
    align-items: center;
    height: 18px;
}
.field > label {
    text-align: right;
    white-space: nowrap;
}
.field > input {
    width: 100%;
    height: 18px;
    border-radius: 3px;
    text-align: center;
    background-color: #545454;
}
.select-wrap {
    display: flex;
    align-items: center;
    height: 18px;
    padding: 0 2px 0 6px;
    border: 1px solid #3a3a3a;
    border-radius: 3px;
    background-color: #282828;
}
.select-wrap select {
    appearance: none;
    flex: 1;
}
.check-line {
    display: flex;
    align-items: center;
    gap: 4px;
}
.disabled {
    color: #888;
}
.disabled input, .disabled input[type="checkbox"] {
    background-color: #444;
}
.scrollbar {
    width: 3px;
    height: 188px;
    margin: 136px 2px 0 2px;
    border-radius: 2px;
    background-color: #474747;
}

/* Status bar */
.statusbar {
    display: flex;
    align-items: center;
    height: 21px;
    flex: none;
    padding: 1px 10px 0 11px;
    background-color: #1d1d1d;
    color: #9a9a9a;
}
.hint {
    display: flex;
    align-items: center;
    gap: 10px;
    width: 211px;
}
.mouse {
    width: 13px;
    height: 15px;
}
.stats {
    margin-left: auto;
}

/* Windows activation notice, lies over the panels */
.activation {
    position: absolute;
    right: 91px;
    bottom: 70px;
    color: rgba(255, 255, 255, 0.45);
    font-family: "Open Sans", "Noto Sans", sans-serif;
    white-space: nowrap;
    pointer-events: none;
}
.activation-title {
    font-size: 19px;
    line-height: 26px;
}
.activation-text {
    font-size: 14px;
    line-height: 20px;
}
```
FILE: mesh.js
```javascript
const canvas = document.getElementById('uvCanvas');
const ctx = canvas.getContext('2d');

const SIDE = 66.8;      // polygon side length
const COL = 100.2;      // horizontal distance between hexagon columns
const ROW = 57.75;      // half of a hexagon's height
const CUTS = 9;         // subdivisions of each side

// [column from the right, row from the top]
const hexagons = [
    [0, 0], [1, 1], [1, 3], [0, 4], [2, 4], [2, 6], [3, 7], [4, 6], [4, 4], [1, 7],
    [3, 9], [4, 10], [2, 10], [2, 12], [3, 13], [1, 13], [6, 4], [6, 6], [7, 7], [5, 7]
];
// [column, row, direction in degrees of the hexagon edge it hangs on]
const pentagons = [
    [1, 3, 210], [1, 3, 330], [1, 3, 90],
    [3, 7, 270], [3, 7, 150], [3, 7, 30],
    [2, 12, 210], [2, 12, 330], [2, 12, 90],
    [6, 6, 210], [6, 6, 330], [6, 6, 90]
];

function polygon(cx, cy, count, radius, start) {
    const corners = [];
    for (let i = 0; i < count; i++) {
        const a = start + i * 2 * Math.PI / count;
        corners.push([cx + radius * Math.cos(a), cy + radius * Math.sin(a)]);
    }
    return { cx, cy, radius, corners };
}

// pull the inner points together a little, as on a ball
function bulge(shape, x, y) {
    const dx = x - shape.cx;
    const dy = y - shape.cy;
    const r = Math.hypot(dx, dy) / shape.radius;
    const s = 0.95 + 0.05 * Math.pow(r, 8);
    return [shape.cx + dx * s, shape.cy + dy * s];
}

function drawShape(shape) {
    const dots = [];
    const n = shape.corners.length;

    ctx.beginPath();
    shape.corners.forEach(c => ctx.lineTo(c[0], c[1]));
    ctx.closePath();
    ctx.fillStyle = '#5c5c5c';
    ctx.fill();
    ctx.strokeStyle = '#fff';
    ctx.lineWidth = 1.5;
    ctx.stroke();

    ctx.beginPath();
    for (let k = 0; k < n; k++) {
        const a = shape.corners[k];
        const b = shape.corners[(k + 1) % n];
        const at = (i, j) => bulge(shape,
            shape.cx + (a[0] - shape.cx) * i / CUTS + (b[0] - shape.cx) * j / CUTS,
            shape.cy + (a[1] - shape.cy) * i / CUTS + (b[1] - shape.cy) * j / CUTS);
        for (let i = 0; i < CUTS; i++) {
            for (let j = 0; i + j < CUTS; j++) {
                const p = at(i, j);
                const q = at(i + 1, j);
                const r = at(i, j + 1);
                ctx.moveTo(p[0], p[1]);
                ctx.lineTo(q[0], q[1]);
                ctx.lineTo(r[0], r[1]);
                ctx.lineTo(p[0], p[1]);
                dots.push(q);
            }
        }
    }
    ctx.stroke();
    dots.push([shape.cx, shape.cy]);
    return dots;
}

function draw() {
    const w = canvas.width = canvas.clientWidth;
    const h = canvas.height = canvas.clientHeight;
    const left = Math.round(w * 0.21);
    const size = 936;

    // image area with its fine grid
    ctx.fillStyle = '#444';
    ctx.fillRect(left, 0, size, h);
    ctx.fillStyle = 'rgba(255, 255, 255, 0.012)';
    for (let i = 1; i < 256; i++) {
        const p = Math.round(i * size / 256);
        ctx.fillRect(left + p, 0, 1, h);
        ctx.fillRect(left, p, size, 1);
    }
    ctx.fillStyle = '#808080';
    ctx.fillRect(left, 0, 1, h);
    ctx.fillRect(left + size, 0, 1, h);

    const x0 = left + 821;
    const y0 = 71;
    const shapes = hexagons.map(([c, r]) => polygon(x0 - c * COL, y0 + r * ROW, 6, SIDE, 0));
    const inner = SIDE / 2 / Math.tan(Math.PI / 5);
    const outer = SIDE / 2 / Math.sin(Math.PI / 5);
    pentagons.forEach(([c, r, deg]) => {
        const a = deg * Math.PI / 180;
        const d = ROW + inner;
        shapes.push(polygon(x0 - c * COL + d * Math.cos(a), y0 + r * ROW + d * Math.sin(a), 5, outer, a));
    });

    // dots sit on whole pixels
    const dots = shapes.flatMap(drawShape);
    ctx.fillStyle = '#000';
    dots.forEach(([x, y]) => {
        const px = Math.round(x);
        const py = Math.round(y);
        ctx.fillRect(px - 2, py - 1, 4, 2);
        ctx.fillRect(px - 1, py - 2, 2, 4);
    });
}

draw();
window.addEventListener('resize', draw);
```
